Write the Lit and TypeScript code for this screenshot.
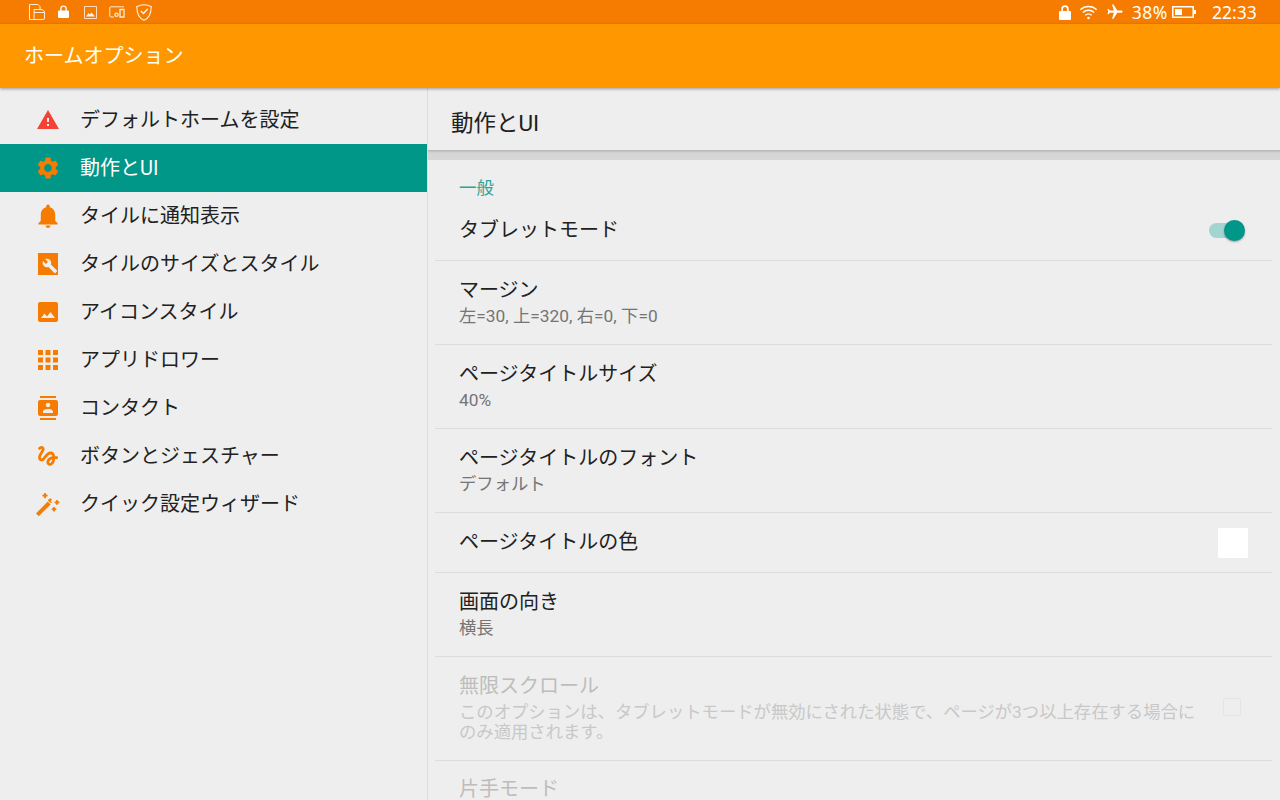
import { LitElement, html, css, svg } from "lit";
import { customElement } from "lit/decorators.js";

const O = "#f57c00";
const icons: Record<string, unknown> = {
  warning: svg`<path fill="#f44336" d="M1 21h22L12 2 1 21zm12-3h-2v-2h2v2zm0-4h-2v-4h2v4z"/>`,
  gear: svg`<path transform="translate(-1 -1) scale(1.083)" fill="${O}" d="M19.14 12.94c.04-.3.06-.61.06-.94 0-.32-.02-.64-.07-.94l2.03-1.58c.18-.14.23-.41.12-.61l-1.92-3.32c-.12-.22-.37-.29-.59-.22l-2.39.96c-.5-.38-1.03-.7-1.62-.94l-.36-2.54c-.04-.24-.24-.41-.48-.41h-3.84c-.24 0-.43.17-.47.41l-.36 2.54c-.59.24-1.13.57-1.62.94l-2.39-.96c-.22-.08-.47 0-.59.22L2.74 8.87c-.12.21-.08.47.12.61l2.03 1.58c-.05.3-.09.63-.09.94s.02.64.07.94l-2.03 1.58c-.18.14-.23.41-.12.61l1.92 3.32c.12.22.37.29.59.22l2.39-.96c.5.38 1.03.7 1.62.94l.36 2.54c.05.24.24.41.48.41h3.84c.24 0 .44-.17.47-.41l.36-2.54c.59-.24 1.13-.56 1.62-.94l2.39.96c.22.08.47 0 .59-.22l1.92-3.32c.12-.22.07-.47-.12-.61l-2.01-1.58zM12 15.6c-1.98 0-3.6-1.62-3.6-3.6s1.62-3.6 3.6-3.6 3.6 1.62 3.6 3.6-1.62 3.6-3.6 3.6z"/>`,
  bell: svg`<path transform="translate(-2.400 -2.400) scale(1.200)" fill="${O}" d="M12 22c1.1 0 2-.9 2-2h-4c0 1.1.9 2 2 2zm6-6v-5c0-3.07-1.63-5.64-4.5-6.32V4c0-.83-.67-1.5-1.5-1.5s-1.5.67-1.5 1.5v.68C7.64 5.36 6 7.92 6 11v5l-2 2v1h16v-1l-2-2z"/>`,
  wrench: svg`<rect x="2" y="1" width="20" height="22" fill="${O}"/><path fill="#eeeeee" transform="translate(6 6) scale(.66)" d="M22.7 19l-9.1-9.1c.9-2.3.4-5-1.5-6.9-2-2-5-2.4-7.4-1.3L9 6 6 9 1.6 4.7C.4 7.1.9 10.1 2.9 12.1c1.9 1.9 4.6 2.4 6.9 1.5l9.1 9.1c.4.4 1 .4 1.4 0l2.3-2.3c.5-.4.5-1.1.1-1.4z"/>`,
  image: svg`<path fill="${O}" d="M22 20V4c0-1.1-.9-2-2-2H4c-1.1 0-2 .9-2 2v16c0 1.1.9 2 2 2h16c1.1 0 2-.9 2-2zM8.5 13.5l2.5 3.01L14.5 12l4.5 6H5l3.5-4.5z"/>`,
  apps: svg`<path fill="${O}" d="M2 2h5v5H2zM9.5 2h5v5h-5zM17 2h5v5h-5zM2 9.5h5v5H2zM9.5 9.5h5v5h-5zM17 9.5h5v5h-5zM2 17h5v5H2zM9.5 17h5v5h-5zM17 17h5v5h-5z"/>`,
  contact: svg`<path fill="${O}" d="M20 0H4v2h16V0zM4 24h16v-2H4v2zM20 4H4c-1.1 0-2 .9-2 2v12c0 1.1.9 2 2 2h16c1.1 0 2-.9 2-2V6c0-1.1-.9-2-2-2zm-8 2.75c1.24 0 2.25 1.01 2.25 2.25s-1.01 2.25-2.25 2.25S9.75 10.24 9.75 9 10.76 6.75 12 6.75zM17 17H7v-1.5c0-1.67 3.33-2.5 5-2.5s5 .83 5 2.5V17z"/>`,
  gesture: svg`<path transform="translate(-1.300 -1.400) scale(1.100)" fill="${O}" d="M4.59 6.89c.7-.71 1.4-1.35 1.71-1.22.5.2 0 1.03-.3 1.52-.25.42-2.86 3.89-2.86 6.31 0 1.28.48 2.34 1.34 2.98.75.56 1.74.73 2.64.46 1.07-.31 1.95-1.4 3.06-2.77 1.21-1.49 2.83-3.44 4.08-3.44 1.63 0 1.65 1.01 1.76 1.79-3.78.64-5.38 3.67-5.38 5.37 0 1.7 1.44 3.09 3.21 3.09 1.63 0 4.29-1.33 4.69-6.1H21v-2.5h-2.47c-.15-1.65-1.09-4.2-4.03-4.2-2.25 0-4.18 1.91-4.94 2.84-.58.73-2.06 2.48-2.29 2.72-.25.3-.68.84-1.11.84-.45 0-.72-.83-.36-1.92.35-1.09 1.4-2.86 1.85-3.52.78-1.14 1.3-1.92 1.3-3.28C8.95 3.69 7.31 3 6.44 3 5.12 3 3.97 4 3.72 4.25c-.36.36-.66.66-.88.93l1.75 1.71zm9.29 11.66c-.31 0-.74-.26-.74-.72 0-.6.73-2.2 2.87-2.76-.3 2.69-1.43 3.48-2.13 3.48z"/>`,
  wand: svg`<path transform="translate(-1 0)" fill="${O}" d="M1 21.400 12.800 9.600l2.800 2.800L3.800 24.200zM13.600 7.200l2-1 1.200 1.400-1 1.600 1.400 1.400-1.600.4-2.600-2.400zM9.200 1h1.600l.2 1.600 1.600.2v1.600l-1.600.2-.2 1.600H9.200L9 4.600l-1.600-.2V2.800L9 2.600zM21.200 8h1.600l.2 1.400 1.400.2v1.600l-1.400.2-.2 1.400h-1.600l-.2-1.400-1.400-.2V9.600l1.400-.2zM18.200 15h1.600l.2 1.300 1.300.2v1.600l-1.300.2-.2 1.300h-1.600l-.2-1.300-1.300-.2v-1.600l1.300-.2z"/>`,
};

const nav = [
  ["warning", "デフォルトホームを設定"],
  ["gear", "動作とUI"],
  ["bell", "タイルに通知表示"],
  ["wrench", "タイルのサイズとスタイル"],
  ["image", "アイコンスタイル"],
  ["apps", "アプリドロワー"],
  ["contact", "コンタクト"],
  ["gesture", "ボタンとジェスチャー"],
  ["wand", "クイック設定ウィザード"],
];

@customElement("app-root")
export class AppRoot extends LitElement {
  static styles = css`
    :host {
      display: block;
      width: 1280px;
      height: 800px;
      overflow: hidden;
      background: #eeeeee;
      font-family: Roboto, "Noto Sans CJK JP", sans-serif;
      color: #212121;
    }
    .status {
      height: 24px;
      background: #f57c00;
      display: flex;
      align-items: center;
      color: #fff;
      padding: 0 24px 0 29px;
    }
    .status svg { display: block; flex: none; }
    .left { display: flex; align-items: center; }
    .i-lock { margin-left: 13px; }
    .i-img { margin-left: 15px; }
    .i-dev { margin-left: 12px; }
    .i-shield { margin-left: 11px; }
    .right { margin-left: auto; display: flex; align-items: center; }
    .i-wifi, .i-plane { margin-left: 8px; }
    .pct, .time {
      font-family: "Noto Sans", sans-serif;
      font-size: 17.5px;
      line-height: 24px;
      color: #fff;
    }
    .pct { margin: 0 4px 0 8px; letter-spacing: .6px; }
    .time { margin-left: 16px; width: 44px; white-space: nowrap; }
    .bar {
      height: 64px;
      background: #ff9800;
      box-sizing: border-box;
      padding: 0 24px 3px;
      display: flex;
      align-items: center;
      color: #fff;
      font-size: 20px;
      position: relative;
      z-index: 2;
      box-shadow: 0 1px 3px rgba(0,0,0,.35);
    }
    .main { display: flex; height: 712px; }
    .side {
      width: 427px;
      flex: none;
      border-right: 1px solid #dcdcdc;
      padding-top: 8px;
    }
    .nav {
      height: 48px;
      display: flex;
      align-items: center;
      padding-left: 36px;
      font-size: 20px;
      gap: 20px;
    }
    .nav svg { width: 24px; height: 24px; flex: none; display: block; }
    .nav span { padding-bottom: 3px; }
    .nav.on { background: #009688; color: #fff; }
    .panel { flex: 1; min-width: 0; display: flex; flex-direction: column; }
    .head {
      height: 60px;
      padding: 2px 0 0 23px;
      box-sizing: border-box;
      display: flex;
      align-items: center;
      font-size: 22.5px;
      flex: none;
      margin-top: 2px;
    }
    .band {
      height: 10px;
      background: linear-gradient(#b4b4b4, #d6d6d6 3px);
      flex: none;
    }
    .list { padding: 0 8px 0 7px; }
    .cat {
      color: #26a69a;
      font-size: 17.5px;
      line-height: 24px;
      padding: 16px 24px 0 24px;
      height: 40px;
      box-sizing: border-box;
    }
    .row {
      display: flex;
      align-items: center;
      box-sizing: border-box;
      border-bottom: 1px solid #dcdcdc;
      padding: 0 24px 0 24px;
    }
    .row:last-child { border-bottom: 0; }
    .txt { flex: 1; min-width: 0; }
    .t { font-size: 20px; line-height: 30px; }
    .s { font-size: 17.33px; line-height: 20px; color: #757575; margin-top: 1px; }
    .r1 { height: 61px; }
    .r2 { height: 84px; padding-bottom: 4px; }
    .r3 { height: 60px; padding-bottom: 2px; }
    .r4 { height: 104px; padding-bottom: 4px; }
    .r5 { height: 84px; align-items: flex-start; padding-top: 13px; }
    .off .t { color: #bdbdbd; }
    .off .s { color: #c8c8c8; }
    .toggle { position: relative; width: 36px; height: 24px; flex: none; margin-right: 3px; }
    .track {
      position: absolute;
      left: 0;
      top: 5px;
      width: 30px;
      height: 15px;
      border-radius: 8px;
      background: #a4d4cf;
    }
    .thumb {
      position: absolute;
      left: 15px;
      top: 2px;
      width: 21px;
      height: 21px;
      border-radius: 50%;
      background: #009688;
      box-shadow: 0 1px 2px rgba(0,0,0,.35);
    }
    .swatch { width: 30px; height: 30px; background: #fff; flex: none; }
    .r3 .swatch { margin-top: 2px; }
    .check {
      width: 18px;
      height: 18px;
      border: 1.5px solid #e4e4e4;
      border-radius: 2px;
      box-sizing: border-box;
      flex: none;
      margin: 0 7px 0 26px;
    }
  `;

  row(cls: string, t: string, s?: string, end?: unknown) {
    return html`<div class="row ${cls}">
      <div class="txt">
        <div class="t">${t}</div>
        ${s ? html`<div class="s">${s}</div>` : ""}
      </div>
      ${end ?? ""}
    </div>`;
  }

  render() {
    return html`
      <div class="status">
        <div class="left">
          <svg width="16" height="16" viewBox="0 0 16 16" fill="none" stroke="#fff" stroke-opacity=".85" stroke-width="1">
            <path d="M.5 15.5V.5H9l2 2v3M.5 15.5H5M5 15.5V5.500h8l2.500 2v6.500a1.500 1.500 0 0 1-1.500 1.500zM5 8.500h10"/>
          </svg>
          <svg class="i-lock" width="11" height="14" viewBox="0 0 11 14">
            <path fill="#fff" d="M1 5.500h1.200V3.800a3.300 3.300 0 0 1 6.600 0v1.700H10a1 1 0 0 1 1 1V12a1 1 0 0 1-1 1H1a1 1 0 0 1-1-1V6.500a1 1 0 0 1 1-1zM3.500 5.500h4V3.800a2 2 0 0 0-4 0z"/>
          </svg>
          <svg class="i-img" width="13" height="13" viewBox="0 0 13 13">
            <path fill="none" stroke="#fff" stroke-opacity=".75" d="M.5 .5h12v12H.5z"/>
            <path fill="#fff" opacity=".9" d="M2 10.500 4.500 7 6 8.500 7.500 6.500l3.500 4z"/>
          </svg>
          <svg class="i-dev" width="16" height="12" viewBox="0 0 16 12" fill="none" stroke="#fff" stroke-opacity=".85">
            <path d="M15 .8H2A1.200 1.200 0 0 0 .8 2v7.500A1.500 1.500 0 0 0 2 11h3"/>
            <path stroke-width="1.300" d="M11 3.500h4v7.500h-4z"/><circle cx="7.500" cy="8.800" r="1.600" fill="none" stroke-width="1.300"/>
          </svg>
          <svg class="i-shield" width="16" height="17" viewBox="0 0 15 16" fill="none" stroke="#fff" stroke-opacity=".9">
            <path d="M7.500.7C5 .7 2.500 1.500.7 2.300c0 6 2 11 6.800 13 4.800-2 6.800-7 6.800-13C12.500 1.500 10 .7 7.500.7z"/>
            <path stroke-width="1.300" d="M4.500 6.500 7 9l4-4.500"/>
          </svg>
        </div>
        <div class="right">
          <svg width="12" height="15" viewBox="0 0 12 15">
            <path fill="#fff" d="M1 6h1.300V4a3.700 3.700 0 0 1 7.400 0v2H11a1 1 0 0 1 1 1v7a1 1 0 0 1-1 1H1a1 1 0 0 1-1-1V7a1 1 0 0 1 1-1zM4 6h4V4a2 2 0 0 0-4 0z"/>
          </svg>
          <svg class="i-wifi" width="19" height="15" viewBox="0 0 18 15" fill="none" stroke="#fff" stroke-width="1.400">
            <path d="M.8 4.800a12 12 0 0 1 16.400 0M3.300 7.500a8.500 8.500 0 0 1 11.400 0M5.800 10.200a5 5 0 0 1 6.400 0"/>
            <circle cx="9" cy="13" r="1.300" fill="#fff" stroke="none"/>
          </svg>
          <svg class="i-plane" width="18" height="18" viewBox="0 0 24 24">
            <path fill="#fff" d="M21 16v-2l-8-5V3.500c0-.83-.67-1.500-1.500-1.500S10 2.670 10 3.500V9l-8 5v2l8-2.500V19l-2 1.500V22l3.500-1 3.500 1v-1.500L13 19v-5.500l8 2.500z" transform="rotate(90 12 12)"/>
          </svg>
          <span class="pct">38%</span>
          <svg width="24" height="12" viewBox="0 0 24 12">
            <path fill="none" stroke="#fff" stroke-width="1.500" d="M.8.800h20.400v10.400H.8z"/>
            <path fill="#fff" d="M3 3h7v6H3zM22 4h2v4h-2z"/>
          </svg>
          <span class="time">22:33</span>
        </div>
      </div>
      <div class="bar">ホームオプション</div>
      <div class="main">
        <div class="side">
          ${nav.map(
            ([i, t]) => html`<div class="nav ${t === "動作とUI" ? "on" : ""}">
              <svg viewBox="0 0 24 24">${icons[i]}</svg><span>${t}</span>
            </div>`
          )}
        </div>
        <div class="panel">
          <div class="head">動作とUI</div>
          <div class="band"></div>
          <div class="list">
            <div class="cat">一般</div>
            ${this.row("r1", "タブレットモード", "", html`<div class="toggle"><div class="track"></div><div class="thumb"></div></div>`)}
            ${this.row("r2", "マージン", "左=30, 上=320, 右=0, 下=0")}
            ${this.row("r2", "ページタイトルサイズ", "40%")}
            ${this.row("r2", "ページタイトルのフォント", "デフォルト")}
            ${this.row("r3", "ページタイトルの色", "", html`<div class="swatch"></div>`)}
            ${this.row("r2", "画面の向き", "横長")}
            ${this.row("r4 off", "無限スクロール", "このオプションは、タブレットモードが無効にされた状態で、ページが3つ以上存在する場合にのみ適用されます。", html`<div class="check"></div>`)}
            ${this.row("r5 off", "片手モード")}
          </div>
        </div>
      </div>
    `;
  }
}
